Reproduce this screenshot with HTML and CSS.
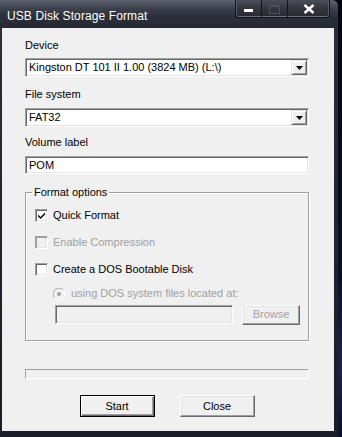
FILE: index.html
```html
<!DOCTYPE html>
<html>
<head>
<meta charset="utf-8">
<link rel="stylesheet" href="styles.css">
</head>
<body>
<div class="desk">
  <div class="window">
    <div class="titlebar">
      <span class="title">USB Disk Storage Format</span>
      <div class="caption-btns">
        <span class="cb cb-min"><span class="min-bar"></span></span>
        <span class="cb cb-max"><span class="max-box"></span></span>
        <span class="cb cb-close">
          <svg width="12" height="10" viewBox="0 0 12 10"><path d="M1.5 1 L10.5 9 M10.5 1 L1.5 9" stroke="#fff" stroke-width="2.4" fill="none"/></svg>
        </span>
      </div>
    </div>
    <div class="client">
      <div class="label first">Device</div>
      <div class="combo">
        <span class="value">Kingston DT 101 II 1.00 (3824 MB) (L:\)</span>
        <span class="drop"><svg width="7" height="4" viewBox="0 0 7 4"><path d="M0 0 H7 L3.5 4 Z" fill="#000"/></svg></span>
      </div>
      <div class="label">File system</div>
      <div class="combo combo-fs">
        <span class="value">FAT32</span>
        <span class="drop"><svg width="7" height="4" viewBox="0 0 7 4"><path d="M0 0 H7 L3.5 4 Z" fill="#000"/></svg></span>
      </div>
      <div class="label label-vol">Volume label</div>
      <div class="textbox"><span class="value">POM</span></div>

      <fieldset class="group">
        <legend>Format options</legend>
        <div class="opt opt-1">
          <span class="check">
            <svg width="9" height="9" viewBox="0 0 9 9"><path d="M1 3.5 L3.5 6 L8 1.5 V3.5 L3.5 8 L1 5.5 Z" fill="#000"/></svg>
          </span>
          <span>Quick Format</span>
        </div>
        <div class="opt opt-2 disabled">
          <span class="check check-dis"></span>
          <span>Enable Compression</span>
        </div>
        <div class="opt opt-3">
          <span class="check"></span>
          <span>Create a DOS Bootable Disk</span>
        </div>
        <div class="opt opt-radio disabled">
          <svg class="radio" width="12" height="12" viewBox="0 0 12 12">
            <path d="M10.5 2.2 A5.5 5.5 0 0 0 1.5 9.8" stroke="#a0a0a0" fill="none"/>
            <path d="M1.5 9.8 A5.5 5.5 0 0 0 10.5 2.2" stroke="#ffffff" fill="none"/>
            <circle cx="6" cy="6" r="4.3" fill="#f0f0f0"/>
            <circle cx="6" cy="6" r="2" fill="#a0a0a0"/>
          </svg>
          <span>using DOS system files located at:</span>
        </div>
        <div class="path-row">
          <span class="textbox textbox-dis"></span>
          <span class="btn btn-dis">Browse</span>
        </div>
      </fieldset>

      <div class="progress"></div>

      <div class="actions">
        <span class="btn btn-default">Start</span>
        <span class="btn">Close</span>
      </div>
    </div>
  </div>
</div>
</body>
</html>
```
FILE: styles.css
```css
html, body {
  margin: 0;
  padding: 0;
}
body {
  width: 342px;
  height: 437px;
  overflow: hidden;
  background: #070915;
  font-family: "Liberation Sans", Arial, sans-serif;
  font-size: 11px;
  color: #000;
}
.desk {
  display: flex;
  height: 437px;
  background: linear-gradient(to bottom, #05060d 0%, #0a0e24 60%, #1a2350 85%, #0c1030 100%);
}
.window {
  width: 338px;
  height: 437px;
  display: flex;
  flex-direction: column;
  background: linear-gradient(to bottom, #2c303b 0%, #23262f 40%, #1c1e25 100%);
  border-radius: 0 6px 0 0;
}
.titlebar {
  height: 28px;
  display: flex;
  justify-content: space-between;
  align-items: flex-start;
  padding-left: 7px;
  box-sizing: border-box;
  background: linear-gradient(to bottom, #5e626d 0%, #3d414d 30%, #2b2f3a 60%, #262a34 100%);
  border-radius: 0 6px 0 0;
}
.title {
  color: #ffffff;
  font-size: 12px;
  line-height: 14px;
  padding-top: 9px;
  letter-spacing: 0.1px;
}
.caption-btns {
  display: flex;
  margin-right: 8px;
  height: 17px;
  border: 1px solid #121319;
  border-top: none;
  border-radius: 0 0 4px 4px;
  overflow: hidden;
  box-shadow: inset 0 -1px 0 #6b6f7a, inset 1px 0 0 #5a5e68, inset -1px 0 0 #5a5e68;
  background: linear-gradient(to bottom, #4a4e59 0%, #33363f 50%, #272a32 100%);
}
.cb {
  display: flex;
  align-items: center;
  justify-content: center;
  height: 17px;
}
.cb-min {
  width: 25px;
  border-right: 1px solid #15161b;
}
.cb-max {
  width: 25px;
  border-right: 1px solid #15161b;
}
.cb-close {
  width: 41px;
}
.min-bar {
  width: 9px;
  height: 3px;
  background: #ffffff;
  margin-top: 3px;
}
.max-box {
  width: 9px;
  height: 6px;
  border: 1px solid #4d515b;
  border-top-width: 2px;
  margin-top: 2px;
}
.client {
  margin: 0 4px 0 2px;
  height: 403px;
  background: #f0f0f0;
  padding: 11px 25px 0 23px;
  box-sizing: border-box;
  display: flex;
  flex-direction: column;
}
.label {
  line-height: 13px;
  margin-top: 11px;
}
.label.first {
  margin-top: 0;
}
.label-vol {
  margin-top: 9px;
}
.combo {
  margin-top: 6px;
  height: 19px;
  box-sizing: border-box;
  display: flex;
  align-items: center;
  justify-content: space-between;
  background: #ffffff;
  border: 1px solid;
  border-color: #a0a0a0 #ffffff #ffffff #a0a0a0;
  box-shadow: inset 1px 1px 0 #696969, inset -1px -1px 0 #e3e3e3;
  padding-left: 3px;
  padding-right: 1px;
}
.combo-fs {
  margin-top: 7px;
}
.value {
  line-height: 13px;
}
.drop {
  width: 16px;
  height: 15px;
  box-sizing: border-box;
  display: flex;
  align-items: center;
  justify-content: center;
  background: #f0f0f0;
  border: 1px solid;
  border-color: #e3e3e3 #696969 #696969 #e3e3e3;
  box-shadow: inset 1px 1px 0 #ffffff, inset -1px -1px 0 #a0a0a0;
}
.textbox {
  margin-top: 7px;
  height: 18px;
  box-sizing: border-box;
  display: flex;
  align-items: center;
  background: #ffffff;
  border: 1px solid;
  border-color: #a0a0a0 #ffffff #ffffff #a0a0a0;
  box-shadow: inset 1px 1px 0 #696969, inset -1px -1px 0 #e3e3e3;
  padding-left: 3px;
}
.group {
  margin: 12px 0 0 0;
  padding: 0 0 15px 9px;
  border: 1px solid #a0a0a0;
  box-shadow: inset 1px 1px 0 #ffffff, 1px 1px 0 #ffffff;
  min-width: 0;
}
.group legend {
  padding: 0 2px;
  margin-left: -3px;
  line-height: 13px;
}
.opt {
  display: flex;
  align-items: center;
  gap: 5px;
  height: 13px;
  line-height: 13px;
  margin-top: 14px;
}
.opt-1 {
  margin-top: 10px;
}
.opt-radio {
  margin-top: 11px;
  padding-left: 18px;
  gap: 6px;
}
.disabled {
  color: #a0a0a0;
}
.check {
  width: 13px;
  height: 13px;
  box-sizing: border-box;
  display: flex;
  align-items: center;
  justify-content: center;
  background: #ffffff;
  border: 1px solid;
  border-color: #a0a0a0 #ffffff #ffffff #a0a0a0;
  box-shadow: inset 1px 1px 0 #696969, inset -1px -1px 0 #e3e3e3;
}
.check-dis {
  background: #f0f0f0;
  box-shadow: inset 1px 1px 0 #a0a0a0, inset -1px -1px 0 #e3e3e3;
}
.radio {
  display: block;
}
.path-row {
  display: flex;
  align-items: center;
  gap: 9px;
  margin-top: 4px;
  padding-left: 20px;
  height: 21px;
}
.textbox-dis {
  margin-top: 0;
  width: 178px;
  height: 19px;
  background: #f0f0f0;
}
.btn {
  width: 75px;
  height: 22px;
  box-sizing: border-box;
  display: flex;
  align-items: center;
  justify-content: center;
  background: #f0f0f0;
  border: 1px solid;
  border-color: #ffffff #696969 #696969 #ffffff;
  box-shadow: inset -1px -1px 0 #a0a0a0, inset 1px 1px 0 #e3e3e3;
  font-size: 11px;
  line-height: 13px;
}
.btn-dis {
  width: 58px;
  height: 20px;
  color: #a0a0a0;
}
.btn-default {
  border: 1px solid #000000;
  box-shadow: inset 1px 1px 0 #ffffff, inset -1px -1px 0 #696969, inset -2px -2px 0 #a0a0a0;
}
.progress {
  margin-top: 28px;
  height: 10px;
  box-sizing: border-box;
  border: 1px solid;
  border-color: #a0a0a0 #ffffff #ffffff #a0a0a0;
  background: #f0f0f0;
}
.actions {
  margin-top: 16px;
  display: flex;
  justify-content: center;
  gap: 25px;
}
```
